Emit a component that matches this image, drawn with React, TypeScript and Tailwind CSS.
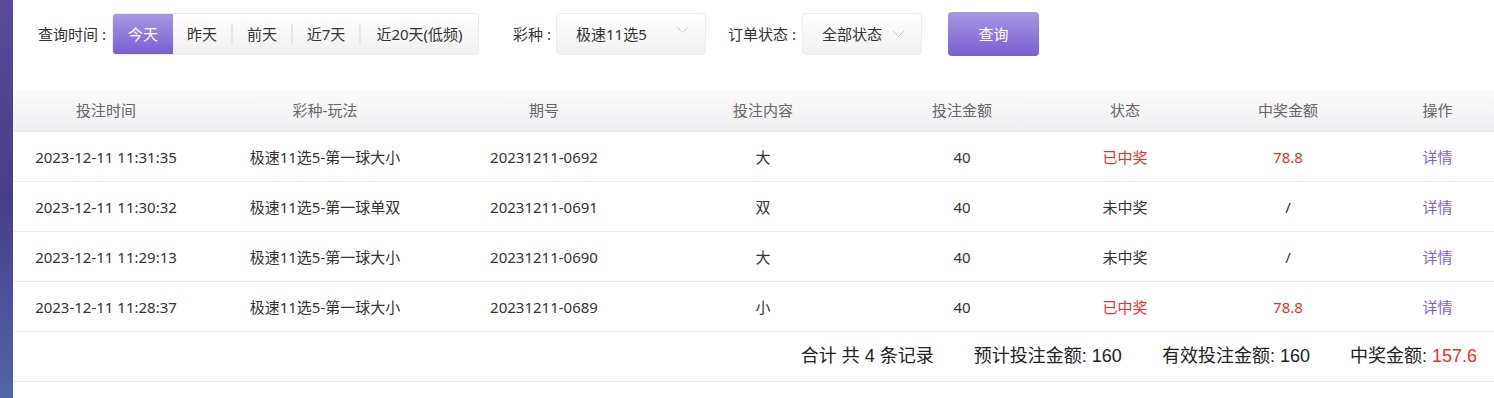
const font = { fontFamily: '"Noto Sans", "Noto Sans CJK SC", sans-serif' }

const rows = [
  { time: '2023-12-11 11:31:35', game: '极速11选5-第一球大小', issue: '20231211-0692', content: '大', amount: '40', won: true, prize: '78.8' },
  { time: '2023-12-11 11:30:32', game: '极速11选5-第一球单双', issue: '20231211-0691', content: '双', amount: '40', won: false, prize: '/' },
  { time: '2023-12-11 11:29:13', game: '极速11选5-第一球大小', issue: '20231211-0690', content: '大', amount: '40', won: false, prize: '/' },
  { time: '2023-12-11 11:28:37', game: '极速11选5-第一球大小', issue: '20231211-0689', content: '小', amount: '40', won: true, prize: '78.8' },
]

const cols = 'grid grid-cols-[186px_252px_186px_252px_146px_180px_146px_133px]'

function Chevron({ up }: { up?: boolean }) {
  return (
    <svg width="13" height="8" viewBox="0 0 13 8" className={`text-[#c9c9d0] ${up ? 'mb-[8px]' : ''}`}>
      <path d="M1 1l5.5 5.5L12 1" fill="none" stroke="currentColor" strokeWidth="1" />
    </svg>
  )
}

function Select({ value, width, up }: { value: string; width: string; up?: boolean }) {
  return (
    <div className={`flex h-[42px] ${width} items-center justify-between rounded border border-[#ededed] bg-gradient-to-b from-white to-[#f1f1f1] pl-[19px] pr-4 text-[15px] text-[#333]`}>
      <span>{value}</span>
      <Chevron up={up} />
    </div>
  )
}

export default function App() {
  const tabs = [
    { t: '昨天', w: 'w-[58px]' },
    { t: '前天', w: 'w-[58px]' },
    { t: '近7天', w: 'w-[66px]' },
    { t: '近20天(低频)', w: 'w-[117px]' },
  ]
  return (
    <div className="flex h-[398px] w-[1494px] bg-white" style={font}>
      {/* side strip */}
      <div className="w-[13px] shrink-0 bg-gradient-to-b from-[#5a4a97] via-[#463d88] to-[#5066a6]" />

      <div className="flex-1">
        {/* filter bar */}
        <div className="flex h-[56px] items-center pl-[25px] pt-[12px] text-[15px] text-[#333]">
          <span className="w-[74px]">查询时间 :</span>
          <div className="flex h-[42px] items-stretch overflow-hidden rounded border border-[#ececec] bg-gradient-to-b from-white to-[#f0f0f0]">
            <div className="flex w-[60px] items-center justify-center bg-gradient-to-b from-[#a797e2] to-[#7a5fd2] text-white">今天</div>
            {tabs.map((x, i) => (
              <div key={x.t} className="flex items-center">
                {i > 0 && <div className="h-[20px] w-[2px] bg-[#e6e6e6]" />}
                <div className={`flex items-center justify-center ${x.w}`}>{x.t}</div>
              </div>
            ))}
          </div>

          <span className="ml-[34px] w-[43px]">彩种 :</span>
          <Select value="极速11选5" width="w-[150px]" up />

          <span className="ml-[22px] w-[74px]">订单状态 :</span>
          <Select value="全部状态" width="w-[120px]" />

          <button className="ml-[26px] h-[44px] w-[91px] rounded bg-gradient-to-b from-[#a898e2] to-[#795dd1] text-[15px] text-white">查询</button>
        </div>

        {/* table */}
        <div className="mt-[34px]">
          <div className={`${cols} h-[42px] items-center border-b border-[#e8e8ef] bg-gradient-to-b from-[#fbfbfb] to-[#efeff1] text-center text-[15px] text-[#666]`}>
            <div>投注时间</div>
            <div>彩种-玩法</div>
            <div>期号</div>
            <div>投注内容</div>
            <div>投注金额</div>
            <div>状态</div>
            <div>中奖金额</div>
            <div className="pl-5">操作</div>
          </div>
          {rows.map((r) => (
            <div key={r.issue} className={`${cols} h-[50px] items-center border-b border-[#eeeeee] pt-[2px] text-center text-[15px] text-[#333]`}>
              <div>{r.time}</div>
              <div>{r.game}</div>
              <div>{r.issue}</div>
              <div>{r.content}</div>
              <div>{r.amount}</div>
              <div className={r.won ? 'text-[#e8322b]' : ''}>{r.won ? '已中奖' : '未中奖'}</div>
              <div className={r.won ? 'text-[#e8322b]' : ''}>{r.prize}</div>
              <div className="pl-5 text-[#7d62d8]">详情</div>
            </div>
          ))}
          <div
            className="flex h-[50px] items-center justify-end gap-[40px] border-b border-[#ececf2] pr-[17px] text-[18px] text-[#222]"
            style={{ fontFamily: '"Liberation Sans Narrow", "Liberation Sans", "Noto Sans CJK SC", sans-serif' }}
          >
            <span>合计 共 4 条记录</span>
            <span>预计投注金额: 160</span>
            <span>有效投注金额: 160</span>
            <span>
              中奖金额: <span className="text-[#e8322b]">157.6</span>
            </span>
          </div>
        </div>
      </div>
    </div>
  )
}
